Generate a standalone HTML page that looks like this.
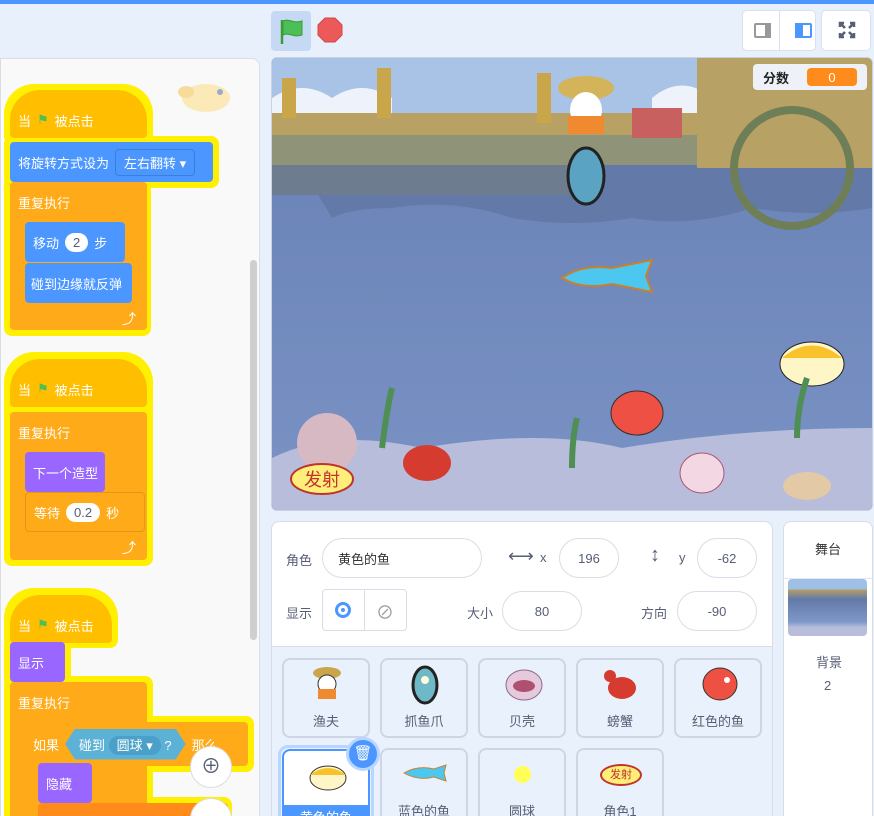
<!DOCTYPE html>
<html style="width:874px;height:816px;overflow:hidden"><head><meta charset="utf-8"><style>
*{box-sizing:border-box;margin:0;padding:0}
body{width:874px;height:816px;overflow:hidden;background:#e8f0fb;font-family:"Liberation Sans","Noto Sans CJK SC",sans-serif;position:relative;font-size:13px}
.a{position:absolute}
.blk{position:absolute;color:#fff;font-size:13px;display:flex;align-items:center;padding-left:8px;white-space:nowrap;border-radius:4px}
.glow{position:absolute;background:#ffef00;border-radius:8px}
.inp{background:#fff;color:#575e75;border-radius:12px;padding:2px 8px;margin:0 6px}
.pill{position:absolute;border:1px solid #d9dde6;border-radius:20px;background:#fff;display:flex;align-items:center;justify-content:center;color:#575e75;font-size:13px}
.lbl{position:absolute;color:#575e75;font-size:13px}
.card{position:absolute;width:88px;height:80px;background:#e9f1fc;border:2px solid #cfd6e3;border-radius:8px}
.card span{position:absolute;bottom:6px;left:0;right:0;text-align:center;color:#575e75;font-size:13px}
</style></head><body>
<div class="a" style="left:0;top:0;width:874px;height:4px;background:#4c97ff"></div>
<div class="a" style="left:271px;top:11px;width:40px;height:40px;background:#c5d9f5;border-radius:4px"></div>
<svg class="a" style="left:278px;top:16px" width="28" height="30"><path d="M4 4v24" stroke="#3a9b37" stroke-width="2.5"/><path d="M5 5c6-3 10 3 19 0v14c-9 3-13-3-19 0z" fill="#4cbf56" stroke="#3a9b37" stroke-width="1"/></svg>
<svg class="a" style="left:317px;top:17px" width="26" height="26"><polygon points="8,1 18,1 25,8 25,18 18,25 8,25 1,18 1,8" fill="#ec5959" stroke="#d04848"/></svg>
<div class="a" style="left:742px;top:10px;width:74px;height:41px;background:#fff;border:1px solid #d9e1ee;border-radius:5px"></div>
<div class="a" style="left:779px;top:10px;width:1px;height:41px;background:#d9e1ee"></div>
<div class="a" style="left:754px;top:23px;width:17px;height:15px;border:2px solid #999;border-radius:2px"></div>
<div class="a" style="left:765px;top:23px;width:6px;height:15px;background:#999"></div>
<div class="a" style="left:795px;top:23px;width:17px;height:15px;border:2px solid #4c97ff;border-radius:2px"></div>
<div class="a" style="left:795px;top:23px;width:8px;height:15px;background:#4c97ff"></div>
<div class="a" style="left:821px;top:10px;width:50px;height:41px;background:#fff;border:1px solid #d9e1ee;border-radius:5px"></div>
<svg class="a" style="left:838px;top:21px" width="18" height="18" stroke="#575e75" stroke-width="2.5" fill="none"><path d="M2 6V2h4M16 6V2h-4M2 12v4h4M16 12v4h-4M3 3l4 4M15 3l-4 4M3 15l4-4M15 15l-4-4"/></svg>
<div class="a" style="left:0;top:58px;width:260px;height:770px;background:#f9f9f9;border:1px solid #d9dde6;border-radius:0 8px 0 0"></div>
<div class="a" style="left:250px;top:260px;width:7px;height:380px;background:#cfcfcf;border-radius:4px"></div>
<svg class="a" style="left:176px;top:80px" width="62" height="36"><ellipse cx="30" cy="18" rx="24" ry="14" fill="#fbe9b7"/><ellipse cx="10" cy="12" rx="8" ry="6" fill="#f5dc98"/><circle cx="44" cy="12" r="3" fill="#9ac"/></svg>
<!-- script1 -->
<div class="glow" style="left:4px;top:84px;width:149px;height:60px;border-radius:30px 30px 8px 8px"></div>
<div class="glow" style="left:4px;top:136px;width:215px;height:52px"></div>
<div class="glow" style="left:4px;top:176px;width:147px;height:160px"></div>
<div class="blk" style="left:10px;top:90px;width:137px;height:48px;background:#ffbf00;border-radius:30px 30px 4px 4px;padding-top:12px">当 <span style="color:#4cbf56;margin:0 6px">⚑</span> 被点击</div>
<div class="blk" style="left:10px;top:142px;width:203px;height:40px;background:#4c97ff">将旋转方式设为<span style="border:1px solid #3d7fd8;border-radius:4px;padding:3px 8px;margin-left:6px">左右翻转 ▾</span></div>
<div class="a" style="left:10px;top:182px;width:137px;height:148px;background:#ffab19;border-radius:4px"></div>
<div class="blk" style="left:10px;top:182px;width:137px;height:40px;background:transparent">重复执行</div>
<div class="blk" style="left:25px;top:222px;width:100px;height:40px;background:#4c97ff">移动<span class="inp">2</span>步</div>
<div class="blk" style="left:25px;top:263px;width:107px;height:40px;background:#4c97ff;padding-left:6px">碰到边缘就反弹</div>
<div class="a" style="left:122px;top:309px;color:#fff;font-size:14px">⤴</div>
<!-- script2 -->
<div class="glow" style="left:4px;top:352px;width:149px;height:214px;border-radius:30px 30px 8px 8px"></div>
<div class="blk" style="left:10px;top:359px;width:137px;height:48px;background:#ffbf00;border-radius:30px 30px 4px 4px;padding-top:12px">当 <span style="color:#4cbf56;margin:0 6px">⚑</span> 被点击</div>
<div class="a" style="left:10px;top:412px;width:137px;height:148px;background:#ffab19;border-radius:4px"></div>
<div class="blk" style="left:10px;top:412px;width:137px;height:40px">重复执行</div>
<div class="blk" style="left:25px;top:452px;width:80px;height:40px;background:#9966ff">下一个造型</div>
<div class="blk" style="left:25px;top:492px;width:120px;height:40px;background:#ffab19;border:1px solid #e5961a">等待<span class="inp">0.2</span>秒</div>
<div class="a" style="left:122px;top:538px;color:#fff;font-size:14px">⤴</div>
<!-- script3 -->
<div class="glow" style="left:4px;top:588px;width:114px;height:60px;border-radius:30px 30px 8px 8px"></div>
<div class="glow" style="left:4px;top:636px;width:67px;height:52px"></div>
<div class="glow" style="left:4px;top:676px;width:149px;height:150px"></div>
<div class="glow" style="left:20px;top:716px;width:234px;height:56px"></div>
<div class="glow" style="left:32px;top:797px;width:200px;height:30px"></div>
<div class="blk" style="left:10px;top:595px;width:102px;height:48px;background:#ffbf00;border-radius:30px 30px 4px 4px;padding-top:12px">当 <span style="color:#4cbf56;margin:0 6px">⚑</span> 被点击</div>
<div class="blk" style="left:10px;top:642px;width:55px;height:40px;background:#9966ff">显示</div>
<div class="a" style="left:10px;top:682px;width:137px;height:140px;background:#ffab19;border-radius:4px"></div>
<div class="blk" style="left:10px;top:682px;width:137px;height:40px">重复执行</div>
<div class="blk" style="left:25px;top:722px;width:223px;height:44px;background:#ffab19">如果<span style="background:#5cb1d6;margin:0 6px;padding:6px 14px;clip-path:polygon(10px 0,calc(100% - 10px) 0,100% 50%,calc(100% - 10px) 100%,10px 100%,0 50%)">碰到 <span style="background:#4aa0c8;border-radius:12px;padding:2px 8px">圆球 ▾</span> ?</span>那么</div>
<div class="a" style="left:25px;top:766px;width:13px;height:60px;background:#ffab19"></div>
<div class="blk" style="left:38px;top:763px;width:54px;height:40px;background:#9966ff">隐藏</div>
<div class="a" style="left:38px;top:803px;width:190px;height:20px;background:#ff8c1a;border-radius:4px"></div>
<div class="a" style="left:190px;top:746px;width:42px;height:42px;border-radius:50%;background:#fff;border:1px solid #ddd;color:#575e75;font-size:20px;text-align:center;line-height:40px">⊕</div>
<div class="a" style="left:190px;top:798px;width:42px;height:42px;border-radius:50%;background:#fff;border:1px solid #ddd"></div>
<!-- stage -->
<svg class="a" style="left:271px;top:57px;border:1px solid #c8d2e2;border-radius:6px;background:#6d86b9" width="602" height="454" viewBox="0 0 600 452">
<defs><linearGradient id="w" x1="0" y1="0" x2="0" y2="1"><stop offset="0" stop-color="#6780b4"/><stop offset="1" stop-color="#7a92c4"/></linearGradient></defs>
<rect width="600" height="452" fill="url(#w)"/>
<rect width="600" height="60" fill="#a9c3e6"/>
<path d="M0 40q30-20 60 0q30-20 60 0v20h-120z M380 40q30-25 60 0v20h-60z" fill="#eef3fb"/>
<path d="M0 60h600v90q-60 10-120 0q-60 20-120 10q-60 10-120 0q-60-20-120-10q-40 0-60 10z" fill="#637aa8"/>
<rect x="0" y="55" width="430" height="22" fill="#b9a063"/>
<rect x="0" y="77" width="430" height="30" fill="#8f9478"/>
<rect x="0" y="107" width="300" height="30" fill="#6d7c8e"/>
<rect x="425" y="0" width="175" height="110" fill="#b8a165"/>
<circle cx="520" cy="110" r="58" fill="none" stroke="#6e7e57" stroke-width="8"/>
<rect x="10" y="20" width="14" height="40" fill="#c9a64a"/><rect x="105" y="10" width="14" height="50" fill="#c9a64a"/><rect x="265" y="15" width="14" height="50" fill="#c9a64a"/>
<path d="M360 50h50v30h-50z" fill="#c86060"/>
<ellipse cx="314" cy="30" rx="28" ry="12" fill="#d3b45b"/>
<ellipse cx="314" cy="52" rx="16" ry="18" fill="#fff"/><rect x="296" y="58" width="36" height="18" fill="#f08a30"/>
<ellipse cx="314" cy="118" rx="18" ry="28" fill="#5aa3c3" stroke="#222" stroke-width="3"/>
<path d="M290 220q20-14 50-10l40-8-6 16 6 16-40-8q-30 6-50-6z" fill="#4cc8f0" stroke="#c9802d" stroke-width="2"/>
<ellipse cx="540" cy="306" rx="32" ry="22" fill="#fff6c8" stroke="#222"/><path d="M510 300q30-25 60 0" fill="#f8c22a"/>
<ellipse cx="365" cy="355" rx="26" ry="22" fill="#ef5044" stroke="#333"/>
<path d="M0 400q60-30 150-10q120-20 200 0q120-20 250-20v82h-600z" fill="#b8bddb"/>
<ellipse cx="55" cy="385" rx="30" ry="30" fill="#d7b9c4"/>
<ellipse cx="155" cy="405" rx="24" ry="18" fill="#d63b30"/>
<ellipse cx="430" cy="415" rx="22" ry="20" fill="#f3d8e3" stroke="#a57"/>
<ellipse cx="535" cy="428" rx="24" ry="14" fill="#e4c9a6"/>
<path d="M110 390q5-40 10-60M300 410q0-30 5-50M525 380q0-30 10-60" stroke="#4f8f55" stroke-width="6" fill="none"/>
<ellipse cx="50" cy="421" rx="31" ry="15" fill="#ffef7a" stroke="#c0342b" stroke-width="2"/>
<text x="50" y="428" font-size="18" text-anchor="middle" fill="#c0342b" font-family="Noto Sans CJK SC,sans-serif">发射</text>
<rect x="481" y="6" width="114" height="26" rx="4" fill="#eef2f8"/>
<text x="491" y="25" font-size="13" font-weight="bold" fill="#222" font-family="Noto Sans CJK SC,sans-serif">分数</text>
<rect x="535" y="10" width="50" height="18" rx="4" fill="#ff8c1a"/>
<text x="560" y="24" font-size="13" text-anchor="middle" fill="#fff">0</text>
</svg>
<!-- sprite info -->
<div class="a" style="left:271px;top:521px;width:502px;height:300px;background:#e9f1fc;border:1px solid #d9dde6;border-radius:8px 8px 0 0"></div>
<div class="a" style="left:272px;top:522px;width:500px;height:125px;background:#fff;border-bottom:1px solid #d9dde6;border-radius:8px 8px 0 0"></div>
<div class="lbl" style="left:286px;top:550px">角色</div>
<div class="pill" style="left:322px;top:538px;width:160px;height:40px;justify-content:flex-start;padding-left:15px;color:#333">黄色的鱼</div>
<div class="lbl" style="left:508px;top:546px;font-size:18px">⟷</div>
<div class="lbl" style="left:540px;top:550px">x</div>
<div class="pill" style="left:559px;top:538px;width:60px;height:40px">196</div>
<div class="lbl" style="left:650px;top:544px;font-size:20px;font-weight:bold">↕</div>
<div class="lbl" style="left:679px;top:550px">y</div>
<div class="pill" style="left:697px;top:538px;width:60px;height:40px">-62</div>
<div class="lbl" style="left:286px;top:603px">显示</div>
<div class="a" style="left:322px;top:589px;width:85px;height:42px;border:1px solid #d9dde6;border-radius:4px;background:#fff"></div>
<div class="a" style="left:364px;top:589px;width:1px;height:42px;background:#d9dde6"></div>
<div class="a" style="left:335px;top:602px;width:16px;height:16px;border:3px solid #4c97ff;border-radius:50%"></div>
<div class="a" style="left:341px;top:608px;width:4px;height:4px;background:#4c97ff;border-radius:50%"></div>
<div class="lbl" style="left:376px;top:599px;font-size:18px;color:#999">⊘</div>
<div class="lbl" style="left:467px;top:603px">大小</div>
<div class="pill" style="left:502px;top:591px;width:80px;height:40px">80</div>
<div class="lbl" style="left:641px;top:603px">方向</div>
<div class="pill" style="left:677px;top:591px;width:80px;height:40px">-90</div>
<div class="card" style="left:282px;top:658px"><svg class="a" style="left:26px;top:4px" width="34" height="40"><ellipse cx="17" cy="9" rx="14" ry="6" fill="#c9a64a"/><ellipse cx="17" cy="20" rx="9" ry="9" fill="#fff" stroke="#333"/><rect x="8" y="25" width="18" height="10" fill="#f08a30"/></svg><span>渔夫</span></div>
<div class="card" style="left:380px;top:658px"><svg class="a" style="left:28px;top:4px" width="30" height="42"><ellipse cx="15" cy="21" rx="12" ry="18" fill="#6fb8c8" stroke="#222" stroke-width="3"/><circle cx="15" cy="16" r="4" fill="#ffd"/></svg><span>抓鱼爪</span></div>
<div class="card" style="left:478px;top:658px"><svg class="a" style="left:24px;top:8px" width="40" height="34"><ellipse cx="20" cy="17" rx="18" ry="15" fill="#e7c9dc" stroke="#8a6a90"/><ellipse cx="20" cy="18" rx="11" ry="6" fill="#b05070"/></svg><span>贝壳</span></div>
<div class="card" style="left:576px;top:658px"><svg class="a" style="left:24px;top:8px" width="40" height="34"><ellipse cx="20" cy="20" rx="14" ry="11" fill="#d63b30"/><circle cx="8" cy="8" r="6" fill="#d63b30"/></svg><span>螃蟹</span></div>
<div class="card" style="left:674px;top:658px"><svg class="a" style="left:24px;top:6px" width="40" height="38"><ellipse cx="20" cy="18" rx="17" ry="16" fill="#ef5044" stroke="#333"/><circle cx="27" cy="14" r="3" fill="#fff"/></svg><span>红色的鱼</span></div>
<div class="a" style="left:278px;top:745px;width:96px;height:80px;border:3px solid #b8d6ff;border-radius:10px"></div>
<div class="a" style="left:282px;top:749px;width:88px;height:80px;background:#fff;border:2px solid #4c97ff;border-radius:8px;overflow:hidden"><svg class="a" style="left:20px;top:12px" width="46" height="30"><ellipse cx="24" cy="15" rx="18" ry="12" fill="#fff6c8" stroke="#333"/><path d="M6 12q18-14 36 0" fill="#f8c22a"/></svg><div class="a" style="left:0;bottom:0;width:100%;height:22px;background:#4c97ff;color:#fff;text-align:center;font-size:13px;line-height:26px">黄色的鱼</div></div>
<div class="a" style="left:346px;top:737px;width:34px;height:34px;border-radius:50%;background:#4c97ff;border:3px solid #b8d6ff;color:#fff;text-align:center;line-height:28px;font-size:15px">🗑</div>
<div class="card" style="left:380px;top:748px"><svg class="a" style="left:20px;top:14px" width="46" height="18"><path d="M2 9q14-8 30-4l12-4-2 8 2 8-12-4q-16 4-30-4z" fill="#4cc8f0" stroke="#c9802d"/></svg><span>蓝色的鱼</span></div>
<div class="card" style="left:478px;top:748px"><div class="a" style="left:34px;top:16px;width:17px;height:17px;border-radius:50%;background:#ffff55"></div><span>圆球</span></div>
<div class="card" style="left:576px;top:748px"><div class="a" style="left:22px;top:14px;width:42px;height:22px;border-radius:50%;background:#ffef7a;border:2px solid #c0342b;color:#c0342b;font-size:11px;text-align:center;line-height:18px">发射</div><span>角色1</span></div>
<div class="a" style="left:783px;top:521px;width:90px;height:300px;background:#fff;border:1px solid #d9dde6;border-radius:8px 8px 0 0"></div>
<div class="a" style="left:784px;top:578px;width:88px;height:1px;background:#e4e7ee"></div>
<div class="lbl" style="left:815px;top:539px;color:#333">舞台</div>
<div class="a" style="left:788px;top:579px;width:79px;height:57px;border-radius:4px;background:linear-gradient(#9ebfe6 0,#9ebfe6 18%,#b9a063 18%,#637aa8 35%,#7f97c8 75%,#b8bddb 85%)"></div>
<div class="lbl" style="left:816px;top:652px">背景</div>
<div class="lbl" style="left:824px;top:678px">2</div>
</body></html>
